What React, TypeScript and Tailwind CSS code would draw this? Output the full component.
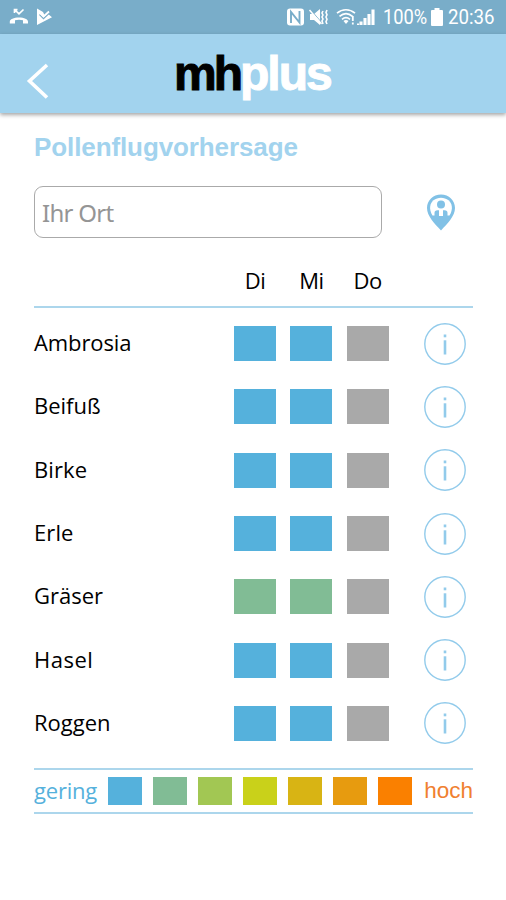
import React, { useState } from "react";

const LEVELS = {
  low: "bg-[#55b1dc]",
  mild: "bg-[#81bc95]",
  none: "bg-[#a9a9a9]",
};

type Level = keyof typeof LEVELS;

const DAYS = ["Di", "Mi", "Do"];

const POLLEN: { name: string; tracking: string; levels: Level[] }[] = [
  { name: "Ambrosia", tracking: "tracking-[-0.1px]", levels: ["low", "low", "none"] },
  { name: "Beifuß", tracking: "tracking-normal", levels: ["low", "low", "none"] },
  { name: "Birke", tracking: "tracking-[0.1px]", levels: ["low", "low", "none"] },
  { name: "Erle", tracking: "tracking-[0.1px]", levels: ["low", "low", "none"] },
  { name: "Gräser", tracking: "tracking-normal", levels: ["mild", "mild", "none"] },
  { name: "Hasel", tracking: "tracking-[0.5px]", levels: ["low", "low", "none"] },
  { name: "Roggen", tracking: "tracking-normal", levels: ["low", "low", "none"] },
];

const SCALE = [
  "bg-[#55b1dc]",
  "bg-[#81bc95]",
  "bg-[#a2c753]",
  "bg-[#c9d11a]",
  "bg-[#d8b414]",
  "bg-[#e79b0f]",
  "bg-[#fa8000]",
];

function StatusBar() {
  return (
    <div className="flex h-[34px] items-center bg-[#79adc9] text-white">
      <svg width="46" height="20" viewBox="0 0 46 20" className="ml-[8px]" fill="none">
        <path d="M6.5 2.5l4.5 4.3 4.5-4.3M6.5 6V2.7h3" stroke="currentColor" strokeWidth="1.7" />
        <path d="M1.8 16.5v-1.8c0-2.6 4-4.3 9.2-4.3s9 1.7 9 4.3v1.8h-5v-3.2c-2.3-.8-5.7-.8-8 0v3.2z" fill="currentColor" />
        <path d="M29 1.5l6 3.5 1.5 3 3-1.5 4.5 3.800L29 18z" fill="currentColor" />
        <path d="M31.500 7.500l4 4L43 4.500" stroke="#79adc9" strokeWidth="1.300" />
        <path d="M32.500 6.500l3 3 5.500-5" stroke="currentColor" strokeWidth="1.800" />
      </svg>
      <svg width="91" height="20" viewBox="0 0 91 20" className="ml-[232px]" fill="none">
        <rect x="1" y="1.5" width="17" height="17" rx="3" fill="currentColor" />
        <path d="M5 16V5l8.500 10.500V4" stroke="#79adc9" strokeWidth="1.900" />
        <path d="M24 7h4l6-5v16l-6-5h-4z" fill="currentColor" />
        <path d="M24.500 2.500l11 13" stroke="#79adc9" strokeWidth="1" />
        <path d="M23.500 3l12 14" stroke="currentColor" strokeWidth="1.500" />
        <path d="M37 4l-1 2 1 2-1 2 1 2-1 2 1 3M41 3l-1 2.4 1 2.3-1 2.3 1 2.3-1 2.4 1 2.3" stroke="currentColor" strokeWidth="1.6" />
        <path d="M51 6.2c5.4-4.6 12.5-4.6 18 0M53.5 9.3c4-3.4 9-3.4 13 0M56 12.3c2.5-2 5.4-2 8 0" stroke="currentColor" strokeWidth="1.7" />
        <path d="M57.5 14c1.6-1.3 3.3-1.3 5 0L60 17z" fill="currentColor" />
        <path d="M66.8 9v5M66.8 15.5v2" stroke="currentColor" strokeWidth="1.8" />
        <path d="M75 18v-3.5M79 18v-7M83 18V7M87 18V2.5" stroke="currentColor" strokeWidth="3.1" />
        <path d="M72 18v-1.600" stroke="currentColor" strokeWidth="2" />
      </svg>
      <span className="ml-[6px] w-[46px] origin-left scale-x-[0.87] font-['Roboto'] text-[21px] leading-none">
        100%
      </span>
      <svg width="12" height="18" viewBox="0 0 12 18" className="ml-[2px]" fill="currentColor">
        <path d="M3.500 0h5v2H11q1 0 1 1v14q0 1-1 1H1q-1 0-1-1V3q0-1 1-1h2.500z" />
      </svg>
      <span className="ml-[5px] w-[48px] origin-left scale-x-[0.89] font-['Roboto'] text-[21px] leading-none">
        20:36
      </span>
    </div>
  );
}

function Header() {
  return (
    <header className="relative flex h-[79px] items-center bg-[#a2d3ee] shadow-[0_2px_4px_rgba(0,0,0,0.35)]">
      <button aria-label="Zurück" className="ml-[26px] mt-[14px]">
        <svg width="24" height="38" viewBox="0 0 24 38" fill="none">
          <path d="M21 3L3.500 19 21 35.500" stroke="white" strokeWidth="3.600" />
        </svg>
      </button>
      <div className="ml-[124px] whitespace-nowrap font-['Liberation_Sans'] text-[48px] font-bold leading-none tracking-[-3px] text-white">
        <span className="text-black [-webkit-text-stroke:1px_black]">mh</span>
        <span className="tracking-[-2px] [-webkit-text-stroke:1px_white]">plus</span>
      </div>
    </header>
  );
}

function LocationPin() {
  return (
    <svg width="30" height="37" viewBox="0 0 30 37" fill="#81c1e6">
      <path d="M15 .5C7 .5 1 6.500 1 14c0 8 7.500 15.500 14 22.500C21.500 29.500 29 22 29 14 29 6.500 23 .5 15 .5z" />
      <path d="M6.500 21.500C2.500 15 4 9 7.500 6.200c4.300-3.400 10.700-3.400 15 0C26 9 27.500 15 23.500 21.500z" fill="white" />
      <circle cx="15" cy="10.500" r="4" />
      <path d="M8.500 22.500v-3.500q0-2.800 3-2.800h7q3 0 3 2.800v3.500z" />
      <path d="M13 16h4v6h-4z" fill="white" />
    </svg>
  );
}

function InfoIcon() {
  return (
    <svg width="42" height="42" viewBox="0 0 42 42" fill="none" stroke="#92cbeb">
      <circle cx="21" cy="21" r="20.200" strokeWidth="1.400" />
      <path d="M21 17.300V31.500" strokeWidth="2.600" />
      <path d="M21 11.500v2.800" strokeWidth="2.600" />
    </svg>
  );
}

export default function App() {
  const [place, setPlace] = useState("");

  return (
    <div className="h-[900px] w-[506px] overflow-hidden bg-white font-['Open_Sans',sans-serif] text-black">
      <StatusBar />
      <Header />

      <main className="pl-[34px] pr-[33px] pt-[17px]">
        <h1 className="h-[34px] whitespace-nowrap font-['Liberation_Sans'] text-[26px] font-bold leading-[34px] tracking-[-0.1px] text-[#a2d3ee]">
          Pollenflugvorhersage
        </h1>

        <div className="mt-[22px] flex h-[52px] items-center">
          <input
            value={place}
            onChange={(e) => setPlace(e.target.value)}
            placeholder="Ihr Ort"
            className="h-[52px] w-[348px] rounded-[9px] border-[1.5px] border-[#aaa] px-[7px] font-['Noto_Sans'] text-[24px] tracking-[-0.7px] outline-none placeholder:text-[#959595]"
          />
          <button aria-label="Standort" className="ml-[44px]">
            <LocationPin />
          </button>
        </div>

        {/* Forecast */}
        <div className="flex h-[70px] gap-[14.3px] border-b-2 border-[#acd6ec] pl-[200px] pt-[24px] text-[22px] leading-[36px] tracking-[-0.5px]">
          {DAYS.map((day) => (
            <span key={day} className="w-[42px] text-center">
              {day}
            </span>
          ))}
        </div>
        <div className="pt-[4px]">
          {POLLEN.map((p) => (
            <div key={p.name} className="flex h-[63.3px] items-center">
              <span className={`w-[200px] whitespace-nowrap pb-[2px] text-[22px] ${p.tracking}`}>{p.name}</span>
              <div className="flex gap-[14.3px]">
                {p.levels.map((level, i) => (
                  <div key={i} className={`h-[35px] w-[42px] ${LEVELS[level]}`} />
                ))}
              </div>
              <button aria-label={`Info ${p.name}`} className="ml-[35px]">
                <InfoIcon />
              </button>
            </div>
          ))}
        </div>

        {/* Legend */}
        <div className="mt-[13px] flex h-[46px] items-center border-y-2 border-[#acd6ec]">
          <span className="w-[74px] pb-[2px] text-[22px] tracking-[-0.2px] text-[#55b1dc]">gering</span>
          <div className="flex gap-[11.5px]">
            {SCALE.map((color) => (
              <div key={color} className={`h-[28px] w-[33.5px] ${color}`} />
            ))}
          </div>
          <span className="ml-auto font-['Liberation_Sans'] text-[22.5px] text-[#f08030]">hoch</span>
        </div>
      </main>
    </div>
  );
}
